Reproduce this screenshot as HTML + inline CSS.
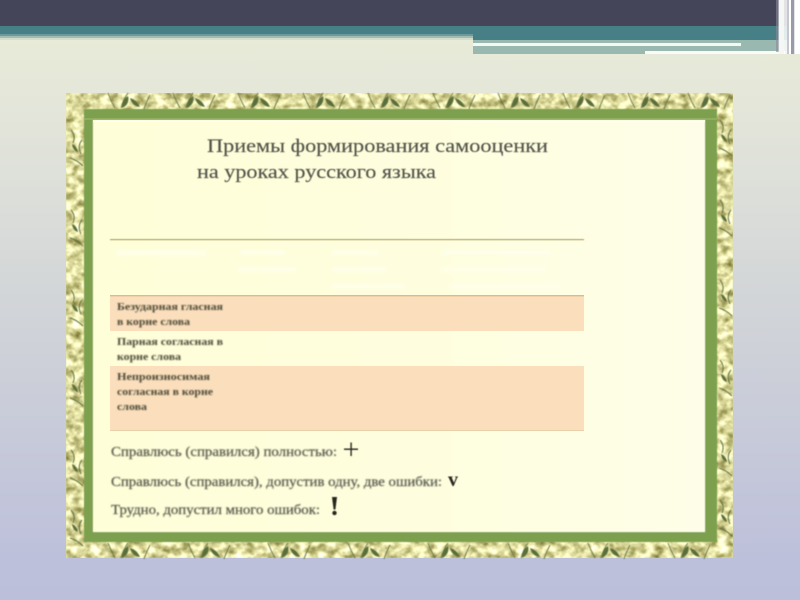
<!DOCTYPE html>
<html lang="ru">
<head>
<meta charset="utf-8">
<title>Приемы формирования самооценки</title>
<style>
html,body{margin:0;padding:0;width:800px;height:600px;overflow:hidden}
body{position:relative;background:linear-gradient(180deg,#e8ebd8 0,#e8ebd8 40px,#e2e4da 130px,#d2d5d8 300px,#bdc0da 560px,#bcbfda 600px)}
svg{position:absolute;left:0;top:0}
</style>
</head>
<body>
<svg width="800" height="600" viewBox="0 0 800 600" xmlns="http://www.w3.org/2000/svg">
<defs>
<filter id="tex" x="0" y="0" width="100%" height="100%" color-interpolation-filters="sRGB">
<feTurbulence type="fractalNoise" baseFrequency="0.11 0.13" numOctaves="3" seed="7"/>
<feColorMatrix type="matrix" values="1 0 0 0 0.37  1 0 0 0 0.36  1.1 0 0 0 0.07  0 0 0 0 1"/>
<feGaussianBlur stdDeviation="0.6"/>
</filter>
<filter id="b1" x="-5%" y="-20%" width="110%" height="140%"><feGaussianBlur stdDeviation="0.55"/></filter>
<filter id="b2" x="-5%" y="-20%" width="110%" height="140%"><feGaussianBlur stdDeviation="0.75"/></filter>
<filter id="b3" x="-5%" y="-50%" width="110%" height="200%"><feGaussianBlur stdDeviation="1.2"/></filter>
<filter id="b4" x="-2%" y="-2%" width="104%" height="104%"><feGaussianBlur stdDeviation="0.5"/></filter>
<linearGradient id="inner" x1="0" y1="0" x2="1" y2="0">
<stop offset="0" stop-color="#fefed8"/><stop offset=".6" stop-color="#fefee0"/><stop offset="1" stop-color="#fefee8"/>
</linearGradient>
<g id="lf" fill="none" stroke="#6d7a48" stroke-width="1">
<path d="M8 0Q11 8 15 15M28 0Q23 7 21 15M50 2Q46 10 44 16"/>
<path d="M22 15Q22 7 28 3Q30 11 22 15ZM30 5Q37 7 40 14Q32 13 30 5Z" fill="#5a6e3a" stroke="none"/>
</g>
<g id="sd" fill="none" stroke="#5f7040" stroke-width="1">
<path d="M3 0Q8 6 5 13M14 10Q9 16 13 24M2 28Q9 30 15 36"/>
<path d="M4 14Q9 16 10 22Q5 21 4 14Z" fill="#5a6e3a" stroke="none"/>
</g>
</defs>

<!-- header -->
<rect x="0" y="0" width="800" height="26" fill="#454559"/>
<rect x="0" y="26" width="800" height="8" fill="#468086"/>
<rect x="0" y="34" width="473" height="2" fill="#6c9a9c"/>
<rect x="0" y="36" width="473" height="2" fill="#a0bcb4"/>
<rect x="0" y="38" width="473" height="2" fill="#d2ddcc"/>
<rect x="473" y="34" width="327" height="6" fill="#468086"/>
<rect x="473" y="40" width="327" height="14" fill="#98b8b0"/>
<rect x="473" y="43" width="268" height="3" fill="#f4f8f2"/>
<rect x="645" y="51" width="140" height="3" fill="#f8fbf6"/>
<rect x="776" y="0" width="2" height="52" fill="#8a8a98" opacity=".6"/>
<rect x="778" y="0" width="1" height="52" fill="#bbbcc8" opacity=".8"/>
<rect x="779" y="0" width="5" height="54" fill="#f4f7f4"/>
<rect x="784" y="0" width="3" height="54" fill="#ffffff" opacity=".85"/>
<rect x="787" y="0" width="2" height="54" fill="#c5c9cf"/>
<rect x="789" y="0" width="2" height="54" fill="#ffffff"/>
<rect x="791" y="0" width="3" height="54" fill="#9a9aa8"/>
<rect x="794" y="0" width="1" height="54" fill="#dfe4e6"/>
<rect x="795" y="0" width="5" height="54" fill="#ffffff"/>

<!-- picture frame -->
<rect x="66" y="93" width="667" height="465" fill="#d9dda6"/>
<rect x="66" y="93" width="667" height="465" filter="url(#tex)"/>
<g filter="url(#b4)">
<use href="#lf" x="100" y="93"/><use href="#lf" x="165" y="93"/><use href="#lf" x="230" y="93"/><use href="#lf" x="295" y="93"/><use href="#lf" x="360" y="93"/><use href="#lf" x="425" y="93"/><use href="#lf" x="490" y="93"/><use href="#lf" x="555" y="93"/><use href="#lf" x="620" y="93"/><use href="#lf" x="680" y="93"/>
<use href="#lf" x="100" y="543"/><use href="#lf" x="180" y="543"/><use href="#lf" x="260" y="543"/><use href="#lf" x="340" y="543"/><use href="#lf" x="420" y="543"/><use href="#lf" x="500" y="543"/><use href="#lf" x="580" y="543"/><use href="#lf" x="660" y="543"/>
<use href="#sd" x="68" y="130"/><use href="#sd" x="68" y="210"/><use href="#sd" x="68" y="290"/><use href="#sd" x="68" y="370"/><use href="#sd" x="68" y="450"/><use href="#sd" x="68" y="510"/>
<use href="#sd" x="717" y="120"/><use href="#sd" x="717" y="200"/><use href="#sd" x="717" y="280"/><use href="#sd" x="717" y="360"/><use href="#sd" x="717" y="440"/><use href="#sd" x="717" y="500"/>
<rect x="84" y="109" width="633" height="433" fill="#7ba04e"/>
<rect x="93" y="120" width="612" height="412" fill="url(#inner)"/>
</g>
<rect x="84" y="118" width="633" height="2" fill="#a3b56a" opacity=".6"/>
<rect x="93" y="120" width="612" height="2" fill="#fffff0" opacity=".8"/>

<!-- title -->
<g filter="url(#b1)" font-family="'Liberation Serif',serif" font-size="19" fill="#52524a" stroke="#52524a" stroke-width=".15">
<text x="207" y="152" textLength="341" lengthAdjust="spacingAndGlyphs">Приемы формирования самооценки</text>
<text x="197" y="178" textLength="239" lengthAdjust="spacingAndGlyphs">на уроках русского языка</text>
</g>

<!-- table -->
<rect x="110" y="239" width="474" height="1.4" fill="#b3a56c" filter="url(#b4)"/>
<g filter="url(#b3)" fill="#ffffee" opacity=".7">
<rect x="116" y="250" width="90" height="6"/>
<rect x="240" y="250" width="45" height="5"/>
<rect x="238" y="267" width="58" height="5"/>
<rect x="332" y="250" width="46" height="5"/>
<rect x="332" y="267" width="54" height="5"/>
<rect x="332" y="284" width="72" height="5"/>
<rect x="442" y="250" width="108" height="5"/>
<rect x="442" y="267" width="104" height="5"/>
<rect x="450" y="284" width="110" height="5"/>
</g>
<rect x="110" y="296" width="474" height="35" fill="#fbdfbc"/>
<rect x="110" y="295" width="474" height="1.4" fill="#e0b88c"/>
<rect x="110" y="366" width="474" height="64" fill="#fbdfbc"/>
<rect x="110" y="430" width="474" height="1" fill="#e8d0a8"/>

<g filter="url(#b2)" font-family="'Liberation Serif',serif" font-size="10.5" font-weight="bold" fill="#4a4636">
<text x="117" y="310" textLength="106" lengthAdjust="spacingAndGlyphs">Безударная гласная</text>
<text x="117" y="325" textLength="73" lengthAdjust="spacingAndGlyphs">в корне слова</text>
<text x="117" y="345" textLength="106" lengthAdjust="spacingAndGlyphs">Парная согласная в</text>
<text x="117" y="360" textLength="64" lengthAdjust="spacingAndGlyphs">корне слова</text>
<text x="117" y="380" textLength="93" lengthAdjust="spacingAndGlyphs">Непроизносимая</text>
<text x="117" y="395" textLength="96" lengthAdjust="spacingAndGlyphs">согласная в корне</text>
<text x="117" y="410" textLength="30" lengthAdjust="spacingAndGlyphs">слова</text>
</g>

<!-- legend -->
<g filter="url(#b2)" font-family="'Liberation Serif',serif" font-size="13.5" fill="#4c4c42" stroke="#4c4c42" stroke-width=".15">
<text x="111" y="456" textLength="226" lengthAdjust="spacingAndGlyphs">Справлюсь (справился) полностью:</text>
<text x="111" y="486" textLength="331" lengthAdjust="spacingAndGlyphs">Справлюсь (справился), допустив одну, две ошибки:</text>
<text x="111" y="514" textLength="209" lengthAdjust="spacingAndGlyphs">Трудно, допустил много ошибок:</text>
</g>
<g filter="url(#b4)" fill="#26261e">
<rect x="344" y="448.5" width="14" height="1.4"/>
<rect x="350.4" y="442.5" width="1.4" height="13.5"/>
<text x="448" y="486" font-family="'Liberation Serif',serif" font-size="20" font-weight="bold">v</text>
<path d="M332 497H337L335.4 509.5H333.6Z"/>
<circle cx="334.5" cy="513" r="2.2"/>
</g>
</svg>
</body>
</html>
